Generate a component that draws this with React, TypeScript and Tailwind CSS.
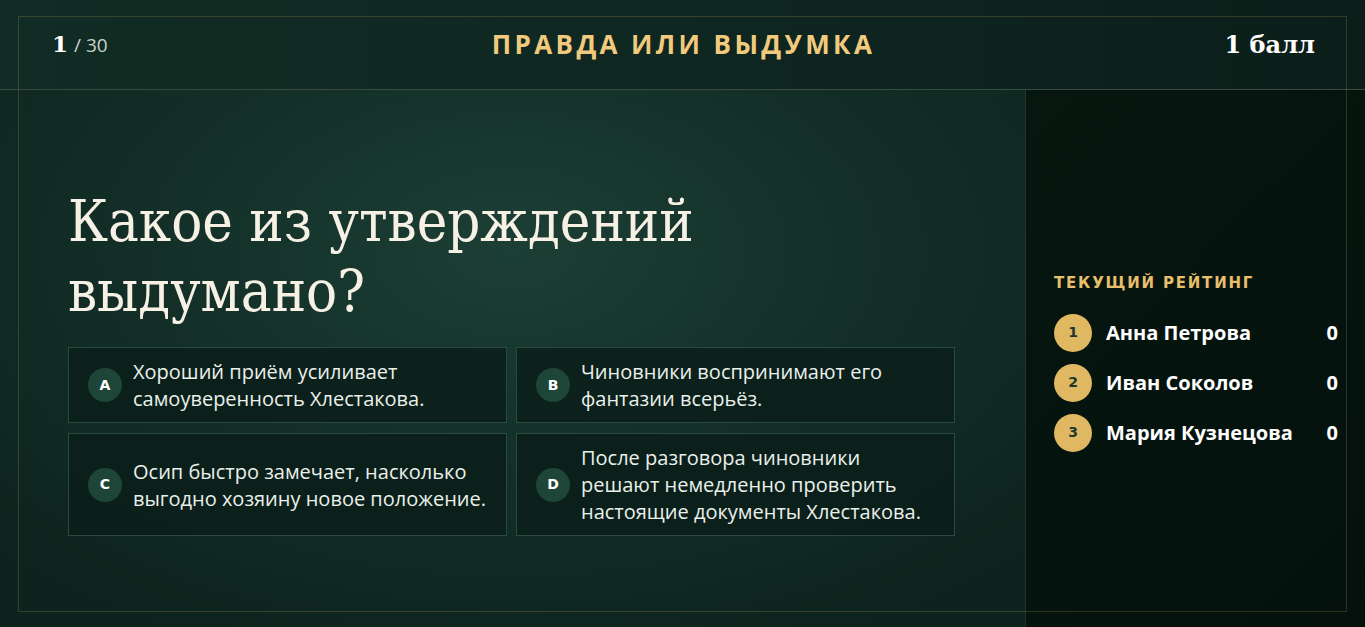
import React from "react";

const options = [
  { l: "A", t: "Хороший приём усиливает самоуверенность Хлестакова." },
  { l: "B", t: "Чиновники воспринимают его фантазии всерьёз." },
  { l: "C", t: "Осип быстро замечает, насколько выгодно хозяину новое положение." },
  { l: "D", t: "После разговора чиновники решают немедленно проверить настоящие документы Хлестакова." },
];

const players = [
  { n: 1, name: "Анна Петрова", s: 0 },
  { n: 2, name: "Иван Соколов", s: 0 },
  { n: 3, name: "Мария Кузнецова", s: 0 },
];

export default function App() {
  return (
    <div className="relative w-[1365px] h-[627px] overflow-hidden flex flex-col bg-[#0e241e] font-['Open_Sans',sans-serif]">
      <header className="h-[90px] shrink-0 flex items-center justify-between pl-[52px] pr-[50px] border-b border-[#384b40] bg-[linear-gradient(90deg,#112c24_0%,#0f2721_50%,#0b1e19_100%)]">
        <div className="flex items-baseline gap-[6px] w-[200px]">
          <span className="font-['DejaVu_Serif',serif] font-bold text-[23px] text-white">1</span>
          <span className="text-[19px] text-[#c9d3cd]">/ 30</span>
        </div>
        <div className="font-['Open_Sans',sans-serif] font-bold text-[26px] tracking-[0.13em] text-[#f2ca7e]">
          ПРАВДА ИЛИ ВЫДУМКА
        </div>
        <div className="w-[200px] text-right font-['DejaVu_Serif',serif] font-bold text-[24px] text-white">
          1 балл
        </div>
      </header>
      <div className="flex-1 flex min-h-0">
        <main className="flex-1 flex flex-col justify-center pt-[6px] pl-[68px] pr-[70px] bg-[radial-gradient(ellipse_70%_80%_at_50%_30%,#1c3f35_0%,#132f28_50%,#0d231d_100%)]">
          <h1 className="font-['DejaVu_Serif_Condensed','DejaVu_Serif',serif] text-[57.5px] leading-[70px] text-[#f6f1e4] mb-[20px] max-w-[720px]">
            Какое из утверждений выдумано?
          </h1>
          <div className="grid grid-cols-2 gap-x-[9px] gap-y-[10px]">
            {options.map((o) => (
              <div
                key={o.l}
                className="flex items-center gap-[11px] border border-[#2b4a3f] bg-[#0b1f1a]/90 pl-[19px] pr-[16px] py-[10px]"
              >
                <div className="w-[34px] h-[34px] shrink-0 rounded-full bg-[#1d4538] flex items-center justify-center font-['DejaVu_Sans',sans-serif] font-bold text-[14px] text-white">
                  {o.l}
                </div>
                <div className="text-[20px] leading-[27px] text-[#eaf0eb]">{o.t}</div>
              </div>
            ))}
          </div>
        </main>
        <aside className="w-[340px] shrink-0 border-l border-[#22342d] bg-[linear-gradient(135deg,#07160f_0%,#04110d_100%)] flex flex-col justify-center pt-[7px] pl-[28px] pr-[27px]">
          <div className="font-['DejaVu_Sans',sans-serif] font-bold text-[15px] tracking-[0.12em] text-[#e8bf6c] mb-[19px]">
            ТЕКУЩИЙ РЕЙТИНГ
          </div>
          <div className="flex flex-col gap-[12px]">
            {players.map((p) => (
              <div key={p.n} className="flex items-center h-[38px]">
                <div className="w-[38px] h-[38px] rounded-full bg-[#e0b862] flex items-center justify-center font-['DejaVu_Sans',sans-serif] font-bold text-[14px] text-[#1c392f]">
                  {p.n}
                </div>
                <div className="ml-[14px] flex-1 font-bold text-[20px] text-white">{p.name}</div>
                <div className="font-bold text-[20px] text-white">{p.s}</div>
              </div>
            ))}
          </div>
        </aside>
      </div>
      <div className="pointer-events-none absolute left-[18px] right-[18px] top-[16px] bottom-[15px] border border-[#d6b464]/20" />
    </div>
  );
}
